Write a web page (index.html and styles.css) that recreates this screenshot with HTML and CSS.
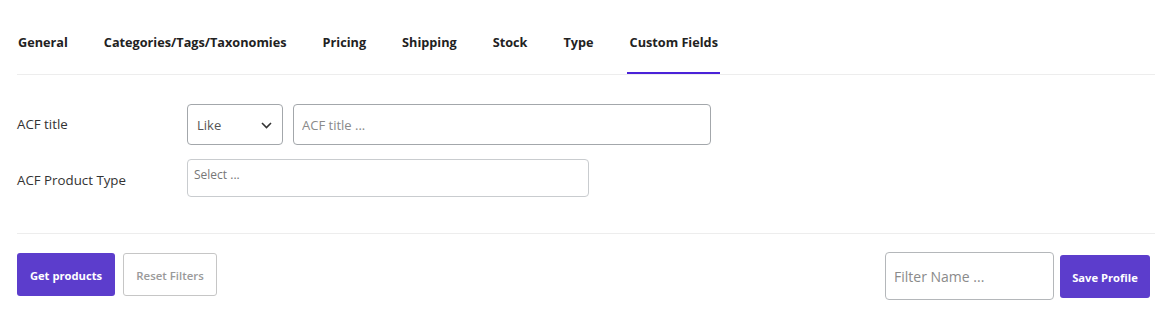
FILE: index.html
```html
<!DOCTYPE html>
<html>
<head>
    <meta charset="utf-8" />
    <title>Custom Fields</title>
    <link rel="stylesheet" href="styles.css">
</head>
<body>

<div class="page">
    <ul class="tabs">
        <li>General</li>
        <li>Categories/Tags/Taxonomies</li>
        <li>Pricing</li>
        <li>Shipping</li>
        <li>Stock</li>
        <li>Type</li>
        <li class="active">Custom Fields</li>
    </ul>

    <div class="fields">
        <div class="row row-title">
            <label class="label">ACF title</label>
            <div class="select select-like">
                <span>Like</span>
                <svg class="chevron" width="11" height="7" viewBox="0 0 11 7"><path d="M1 1l4.5 4.5L10 1" fill="none" stroke="#333" stroke-width="1.6"/></svg>
            </div>
            <input class="text text-title" type="text" placeholder="ACF title ..." />
        </div>
        <div class="row row-type">
            <label class="label">ACF Product Type</label>
            <div class="select select-multi">Select ...</div>
        </div>
    </div>

    <div class="actions">
        <div class="left">
            <button class="btn btn-primary btn-get">Get products</button>
            <button class="btn btn-ghost">Reset Filters</button>
        </div>
        <div class="right">
            <input class="text text-name" type="text" placeholder="Filter Name ..." />
            <button class="btn btn-primary btn-save">Save Profile</button>
        </div>
    </div>
</div>

</body>
</html>
```

FILE: styles.css
```css
* { padding: 0; margin: 0; box-sizing: border-box; }
li { list-style: none; }

body { background: #ffffff; font-family: "Open Sans", "Liberation Sans", sans-serif; color: #333; }

.page { padding: 0 12px 0 17px; }

/* tabs */
.tabs { display: flex; gap: 34px; border-bottom: 1px solid #ededed; height: 75px; }
.tabs li { padding: 33px 1px 21px; line-height: 18px; font-size: 12.7px; font-weight: 700; color: #222; border-bottom: 2px solid transparent; cursor: pointer; }
.tabs li.active { border-bottom-color: #4a22d8; padding-left: 3px; padding-right: 2px; margin-left: -2px; }

/* fields */
.fields { padding: 29px 0 36px; border-bottom: 1px solid #ededed; }
.row { display: flex; align-items: center; }
.row-type { margin-top: 14px; }
.label { width: 170px; font-size: 13.3px; color: #333; margin-top: -1px; }
.row-type .label { margin-top: 0; padding-top: 4px; }

.select { border: 1px solid #a3a7ab; border-radius: 4px; background: #fff; }
.select-like { width: 96px; height: 41px; display: flex; align-items: center; justify-content: space-between; padding: 0 10px 0 9px; font-size: 13px; color: #555; }
.chevron { margin-top: 2px; }
.select-multi { width: 402px; height: 38px; border-color: #c9cccf; padding: 7px 6px; font-size: 12px; color: #777; line-height: 16px; }

.text { border: 1px solid #a3a7ab; border-radius: 4px; font-family: "Open Sans", "Liberation Sans", sans-serif; outline: none; }
.text::placeholder { color: #8a8a8a; }
.text-title { width: 418px; height: 41px; margin-left: 10px; padding: 0 8px; font-size: 13px; }

/* actions */
.actions { display: flex; justify-content: space-between; padding: 19px 5px 0 0; }
.left { display: flex; gap: 8px; }
.right { display: flex; gap: 6px; align-items: flex-start; margin-top: -1px; }

.btn { font-family: "Open Sans", "Liberation Sans", sans-serif; font-size: 11.2px; font-weight: 700; border-radius: 3px; cursor: pointer; padding-top: 1px; }
.btn-primary { background: #5c3dcc; border: none; color: #fff; }
.btn-get { width: 98px; height: 43px; }
.btn-ghost { width: 94px; height: 43px; background: #fff; border: 1px solid #c6c6c6; color: #9a9a9a; font-weight: 600; font-size: 11.4px; }
.btn-save { width: 90px; height: 43px; margin-top: 3px; }

.text-name { width: 169px; height: 48px; padding: 0 8px; font-size: 14px; border-color: #b4b7ba; }
```
